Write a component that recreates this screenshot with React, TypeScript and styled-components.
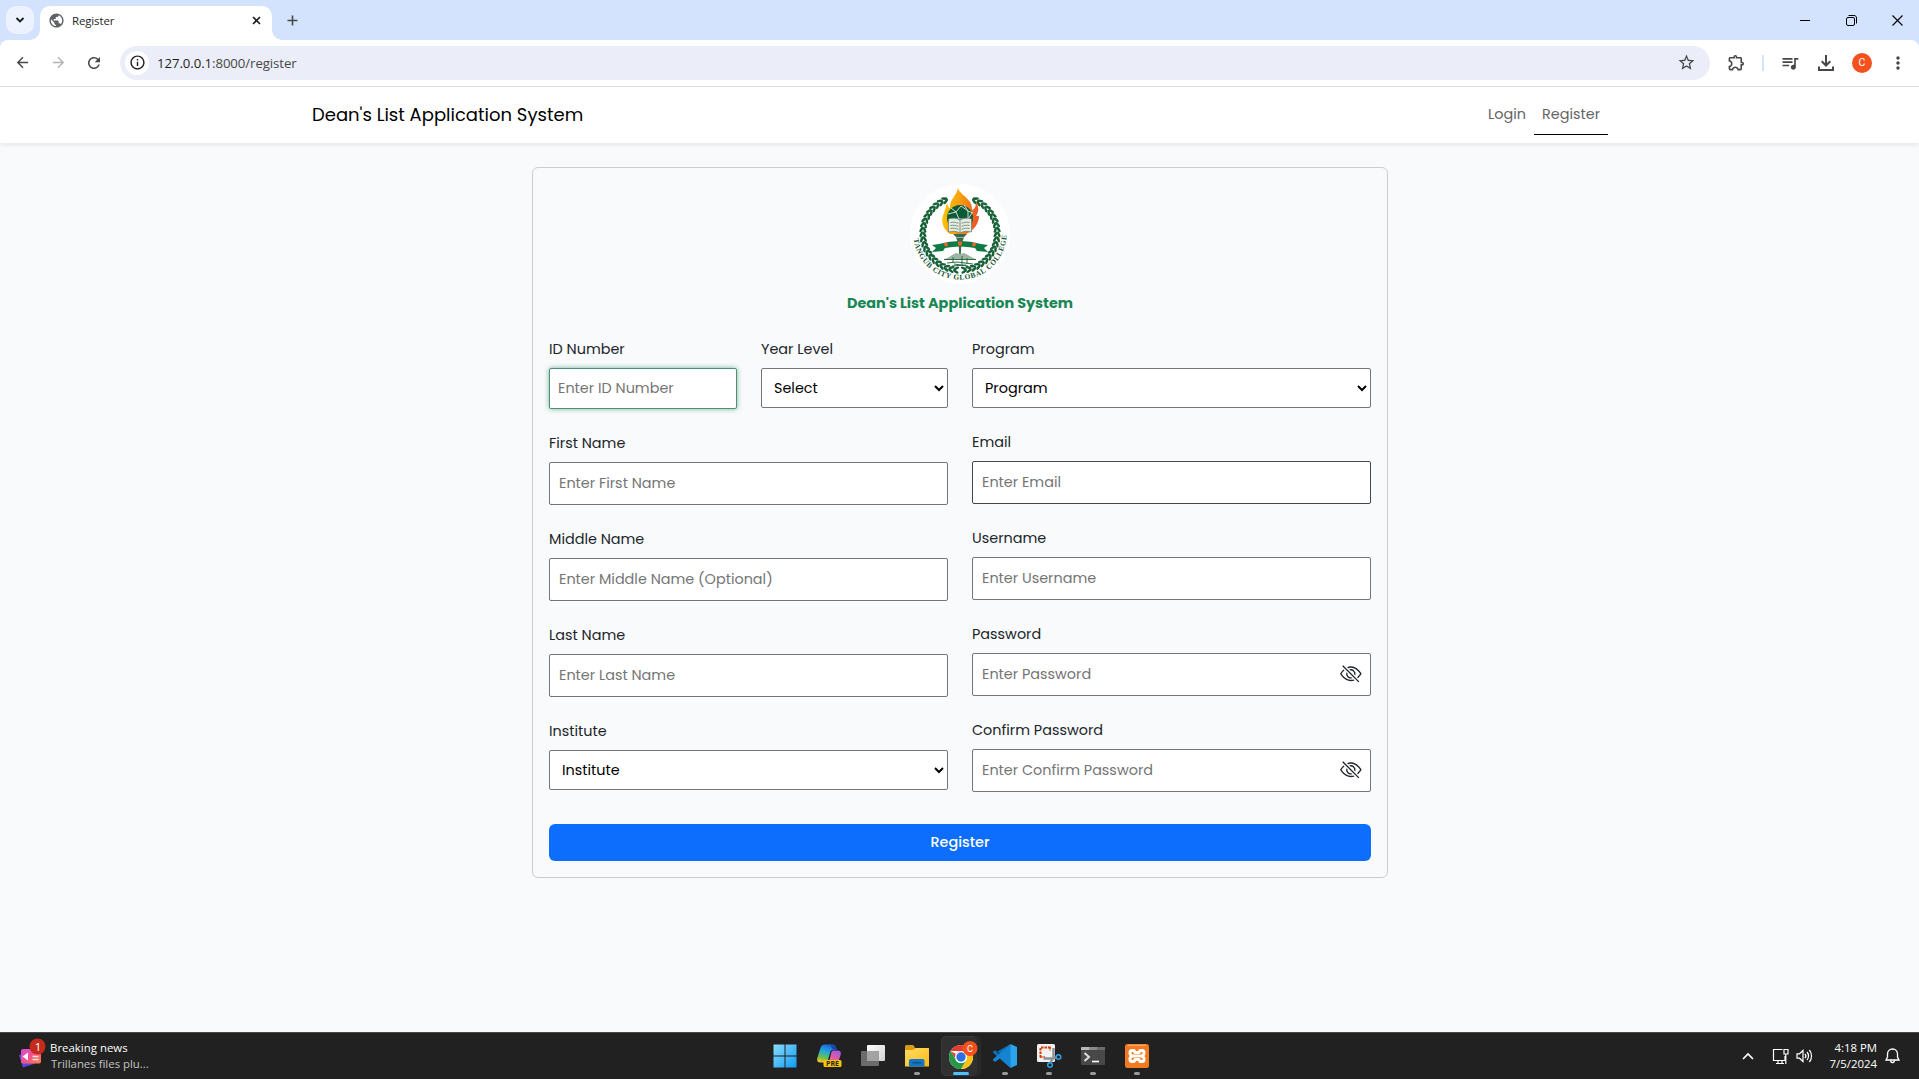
import React from "react";
import styled, { createGlobalStyle } from "styled-components";
import { BsEyeSlash } from "react-icons/bs";
import {
  MdArrowBack,
  MdArrowForward,
  MdRefresh,
  MdOutlineInfo,
  MdStarBorder,
  MdOutlineExtension,
  MdQueueMusic,
  MdMoreVert,
  MdPublic,
} from "react-icons/md";

const ui = `"Open Sans", "Noto Sans", sans-serif`;
const brand = `Poppins, Inter, "Open Sans", sans-serif`;

const GlobalStyle = createGlobalStyle`
  *, *::before, *::after { box-sizing: border-box; }
  body { margin: 0; background: #f8fafc; overflow: hidden; }
  svg { display: block; flex: none; overflow: visible; }
`;

const Screen = styled.div`
  display: flex;
  flex-direction: column;
  height: 1079px;
  font-family: ${ui};
`;

/* ---------- Browser window ---------- */

const TabStrip = styled.div`
  display: flex;
  align-items: flex-start;
  height: 40px;
  padding: 6px 0 0 6px;
  background: #d3e3fd;
`;

const TabSearch = styled.button`
  display: grid;
  place-items: center;
  width: 28px;
  height: 28px;
  padding: 0;
  border: 0;
  border-radius: 10px;
  background: #ecf3fe;
`;

const Tab = styled.div`
  position: relative;
  display: flex;
  align-items: center;
  width: 232px;
  height: 34px;
  margin-left: 6px;
  padding: 0 8px 6px 8px;
  border-radius: 10px 10px 0 0;
  background: #fff;
  color: #1f1f1f;
  font-size: 11.4px;

  &::before,
  &::after {
    content: "";
    position: absolute;
    bottom: 0;
    width: 10px;
    height: 10px;
  }
  &::before {
    left: -10px;
    background: radial-gradient(circle at 0 0, transparent 9.5px, #fff 10px);
  }
  &::after {
    right: -10px;
    background: radial-gradient(circle at 100% 0, transparent 9.5px, #fff 10px);
  }
`;

const TabTitle = styled.span`
  flex: 1;
  margin-left: 7px;
  padding-top: 1px;
  letter-spacing: -0.1px;
  line-height: 16px;
`;

const StripButton = styled.span`
  display: grid;
  place-items: center;
  width: 16px;
  height: 28px;
`;

const NewTab = styled.span`
  display: grid;
  place-items: center;
  width: 28px;
  height: 28px;
  margin-left: 6px;
`;

const WindowControls = styled.div`
  display: flex;
  margin: 0 -1px 0 auto;
`;

const WindowButton = styled.span`
  display: grid;
  place-items: center;
  width: 46px;
  height: 28px;
`;

const StripFill = styled.div`
  background: #d3e3fd;
`;

const Toolbar = styled.div`
  display: flex;
  align-items: center;
  height: 47px;
  padding: 0 3px 1px 9px;
  border-bottom: 1px solid #dfe1e3;
  border-radius: 8px 8px 0 0;
  background: #fff;
`;

const ToolButton = styled.span<{ $w: number; $dim?: boolean }>`
  flex: none;
  display: grid;
  place-items: center;
  width: ${(p) => p.$w}px;
  height: 34px;
  color: ${(p) => (p.$dim ? "#b3b3b3" : "#474747")};
`;

const AddressBar = styled.div`
  flex: none;
  display: flex;
  align-items: center;
  width: 1590px;
  height: 34px;
  margin-left: 13px;
  padding: 0 14px 0 5px;
  border-radius: 17px;
  background: #ebeef8;
  color: #474747;
`;

const SiteInfo = styled.span`
  display: grid;
  place-items: center;
  width: 24px;
  height: 24px;
  border-radius: 50%;
  background: #fff;
  color: #1f1f1f;
`;

const Url = styled.span`
  flex: 1;
  margin-left: 8px;
  font-size: 13.2px;
  letter-spacing: -0.07px;
  line-height: 20px;

  b {
    color: #1f1f1f;
    font-weight: 400;
  }
`;

const Divider = styled.span`
  width: 2px;
  height: 16px;
  margin-right: 8px;
  background: #d3e3fd;
`;

const Profile = styled.span`
  display: grid;
  place-items: center;
  width: 20px;
  height: 20px;
  margin: 0 8px;
  border-radius: 50%;
  background: #f4511e;
  color: #fff;
  font: 400 10.5px/20px Roboto, sans-serif;
`;

/* ---------- Page ---------- */

const Page = styled.div`
  flex: 1;
  display: flex;
  flex-direction: column;
  align-items: center;
  background: #f8fafc;
  color: #212529;
  font-family: ${brand};
  font-size: 14.4px;
`;

const NavBar = styled.nav`
  align-self: stretch;
  display: flex;
  justify-content: center;
  height: 56px;
  padding-left: 1px;
  background: #fff;
  box-shadow: 0 2px 4px rgba(0, 0, 0, 0.075);
`;

const NavInner = styled.div`
  display: flex;
  align-items: center;
  justify-content: space-between;
  width: 1296px;
`;

const Brand = styled.span`
  padding-bottom: 2px;
  color: #000;
  font-size: 18px;
`;

const NavLinks = styled.div`
  display: flex;
`;

const NavLink = styled.a<{ $active?: boolean }>`
  height: 40px;
  padding: 0 8px;
  border-bottom: 1px solid ${(p) => (p.$active ? "#000" : "transparent")};
  color: #646464;
  line-height: 39px;
`;

const Card = styled.form`
  display: flex;
  flex-direction: column;
  align-items: center;
  width: 856px;
  height: 711px;
  margin: 24px 0 0 1px;
  padding: 16px;
  border: 1px solid #cbcdcf;
  border-radius: 6px;
`;

const CardTitle = styled.h1`
  height: 22px;
  margin: 8px 0 24px;
  color: #198754;
  font-size: 14.4px;
  font-weight: 700;
  line-height: 22px;
`;

const Columns = styled.div`
  align-self: stretch;
  display: grid;
  grid-template-columns: 399px 399px;
  gap: 24px;
`;

const Column = styled.div`
  display: flex;
  flex-direction: column;
  gap: 23px;
`;

const SplitRow = styled.div`
  display: grid;
  grid-template-columns: 188px 187px;
  gap: 24px;
`;

const Field = styled.div`
  display: flex;
  flex-direction: column;
  gap: 8px;
`;

const Label = styled.label`
  height: 22px;
  line-height: 22px;
`;

const InputWrap = styled.div`
  position: relative;
  display: flex;
`;

const Input = styled.input<{ $look?: "focus" | "dark" }>`
  width: 100%;
  height: ${(p) => (p.$look === "focus" ? 41 : 43)}px;
  padding: ${(p) => (p.$look === "focus" ? "0 8px" : "0 9px")};
  border: 1px solid
    ${(p) => (p.$look === "focus" ? "#4f8f73" : p.$look === "dark" ? "#45464b" : "#76767a")};
  border-radius: 2px;
  outline: 0;
  background: #fff;
  box-shadow: ${(p) => (p.$look === "focus" ? "0 0 5px rgba(25, 135, 84, 0.6)" : "none")};
  font: inherit;

  &::placeholder {
    color: #757575;
    opacity: 1;
  }
`;

const Select = styled.select`
  width: 100%;
  height: 40px;
  padding: 0 8px;
  border: 1px solid #767676;
  border-radius: 2px;
  background: #fff;
  color: #000;
  font: inherit;
`;

const EyeToggle = styled.span`
  position: absolute;
  top: 10px;
  right: 9px;
`;

const Submit = styled.button`
  align-self: stretch;
  height: 37px;
  margin-top: 32px;
  border: 0;
  border-radius: 6px;
  background: #0d6efd;
  color: #fff;
  font: inherit;
  font-weight: 500;
`;

/* ---------- Taskbar ---------- */

const Taskbar = styled.footer`
  display: grid;
  grid-template-columns: 1fr auto 1fr;
  height: 47px;
  border-top: 1px solid #47484a;
  background: #212121;
  color: #fff;
  font-size: 11.4px;
`;

const News = styled.div`
  display: flex;
  align-items: center;
  gap: 5px;
  padding-left: 17px;
`;

const NewsText = styled.div`
  line-height: 16px;

  p {
    margin: 0;
    letter-spacing: 0.02px;
  }
  p + p {
    padding-left: 1px;
    color: #c3c3c3;
    letter-spacing: 0;
  }
`;

const Apps = styled.div`
  display: flex;
  align-items: center;
  padding-left: 2px;
`;

const AppSlot = styled.span<{ $active?: boolean; $running?: boolean }>`
  position: relative;
  display: grid;
  place-items: center;
  width: 40px;
  height: 40px;
  margin: 0 2px;
  border-radius: 5px;
  background: ${(p) => (p.$active ? "#303030" : "none")};
  box-shadow: ${(p) => (p.$active ? "inset -4px 0 0 #292929, inset 0 0 0 1px #393939" : "none")};

  &::after {
    content: "";
    position: absolute;
    bottom: 1px;
    left: 50%;
    width: ${(p) => (p.$active ? 16 : 6)}px;
    height: 3px;
    border-radius: 2px;
    transform: translateX(-50%);
    background: ${(p) => (p.$active ? "#4cc2ff" : p.$running ? "#9a9a9a" : "none")};
  }
`;

const Tray = styled.div`
  display: flex;
  align-items: center;
  justify-content: flex-end;
  padding-right: 19px;
`;

const TrayIcon = styled.span<{ $gap: number }>`
  margin-right: ${(p) => p.$gap}px;
`;

const Clock = styled.div`
  margin-right: 8px;
  line-height: 16px;
  text-align: right;
`;

/* ---------- Drawings ---------- */

const stroke = { fill: "none", stroke: "#fff", strokeWidth: 1.2 } as const;

function Wreath() {
  const leaves: React.ReactElement[] = [];
  for (let i = 0; i < 21; i++) {
    const deg = 25 + i * 7.5;
    for (const side of [-1, 1]) {
      const a = (deg * Math.PI) / 180;
      const x = 50 + side * Math.sin(a) * 37.2;
      const y = 49.6 - Math.cos(a) * 36.6;
      const t = side * deg;
      leaves.push(
        <g key={`${i}${side}`} transform={`translate(${x} ${y}) rotate(${t})`}>
          <ellipse cx="0" cy="-1.8" rx="3.2" ry="1.3" transform={`rotate(${side * -26})`} />
          <ellipse cx="0" cy="1.8" rx="3.2" ry="1.3" transform={`rotate(${side * 26})`} />
        </g>
      );
    }
  }
  return <g fill="#176038">{leaves}</g>;
}

const Seal = () => (
  <svg width="100" height="100" viewBox="0 0 100 100">
    <defs>
      <linearGradient id="flame" x1="0" y1="0" x2="1" y2="0.2">
        <stop offset="0" stopColor="#fdd000" />
        <stop offset=".5" stopColor="#f9a010" />
        <stop offset="1" stopColor="#ee5a24" />
      </linearGradient>
      <path id="ring" d="M3.4 52A46.7 46.7 0 0 0 96.6 52" />
    </defs>
    <circle cx="50" cy="50" r="50" fill="#fff" />
    <Wreath />
    <path
      fill="url(#flame)"
      d="M48 4c1 5 8 8 12 14 2 3 2 6 2 8 3-1 4-4 4-8 3 5 3 9 0 14l3 0c0 8-6 15-13 18H40c-7-5-10-13-6-21l3-10c1 4 2 5 3 5-1-8 7-13 8-20z"
    />
    <circle cx="50" cy="34" r="13" fill="#0d5a37" />
    <g fill="none" stroke="#dfeee4" strokeWidth=".9">
      <path d="M38 30l8-2 5-6M46 28l3 7 9 0 4-6M51 22l7 5 0 8M41 24l5 4M39 36l10-1M54 21l4 6 5 2" />
    </g>
    <path fill="#e6ebe0" stroke="#6d8577" strokeWidth=".8" d="M38.500 35c4-1.500 8-1 11.500 1 3.500-2 8-2.500 11.500-1v13c-4-1-8-1-11.500 1-3.500-2-7.500-2-11.500-1z" />
    <path fill="none" stroke="#7b9786" strokeWidth="1" d="M50 36v13M40.500 38.500c3-.5 5-.3 8 .8M40.500 41.500c3-.5 5-.3 8 .8M40.500 44.500c3-.5 5-.3 8 .8M59.500 38.500c-3-.5-5-.3-8 .8M59.500 41.500c-3-.5-5-.3-8 .8M59.500 44.500c-3-.5-5-.3-8 .8" />
    <path fill="#386b4b" d="M43 50h14l-3 3h-8zM46 53.500h8l-2 5h-4zM48.500 58h3l-.7 13h-1.600z" />
    <path fill="#0f7a43" d="M29 60q21-6 42 0l7 1-4 3 4 4-11-1-2-3q-15-3-30 0l-2 3-11 1 4-4-4-3z" />
    <g fill="#f0632a">
      <circle cx="36" cy="60.500" r="1.900" />
      <circle cx="50" cy="59.500" r="2.200" />
      <circle cx="64" cy="60.500" r="1.900" />
    </g>
    <path fill="#9db5a1" d="M34 75c5-1 7-4 12-6l4 1 4-1c5 2 8 5 12 6l-8 1H42z" />
    <g fill="none" stroke="#2c6b47" strokeWidth="1">
      <path d="M34 75.500h32M37 79l10-1 16 2M42 82l14-1M43 73v6M52 72v10M57 74v6M44 80l14 2" />
    </g>
    <text fill="#14532f" fontFamily='"Liberation Serif", serif' fontWeight="700" fontSize="7.400" letterSpacing="0">
      <textPath href="#ring" startOffset="3" textLength="138" lengthAdjust="spacing">
        TANGUB CITY GLOBAL COLLEGE
      </textPath>
    </text>
  </svg>
);

const WindowsIcon = () => (
  <svg width="24" height="24" viewBox="0 0 24 24">
    <defs>
      <linearGradient id="win" x1="0" y1="0" x2="1" y2="1">
        <stop offset="0" stopColor="#8adcfb" />
        <stop offset="1" stopColor="#0f9cf3" />
      </linearGradient>
    </defs>
    <path fill="url(#win)" d="M.5 .5h11v11H.5zM12.500 .5h11v11H12.500zM.5 12.500h11v11H.5zM12.500 12.500h11v11H12.500z" />
  </svg>
);

const CopilotIcon = () => (
  <svg width="26" height="26" viewBox="0 0 26 26">
    <defs>
      <linearGradient id="cpa" x1=".6" y1="0" x2=".3" y2="1">
        <stop offset="0" stopColor="#1e62d8" />
        <stop offset=".4" stopColor="#22a6e0" />
        <stop offset=".75" stopColor="#6cc04a" />
        <stop offset="1" stopColor="#f4c51d" />
      </linearGradient>
      <linearGradient id="cpb" x1=".7" y1="0" x2=".3" y2="1">
        <stop offset="0" stopColor="#9a5be8" />
        <stop offset=".5" stopColor="#e8599d" />
        <stop offset="1" stopColor="#f98b5c" />
      </linearGradient>
    </defs>
    <path fill="url(#cpa)" d="M8.500 1.500h8c2 0 3 1 3.600 3l.6 2.200h-3.500c-1.700 0-2.500 1-3 2.600L12 17c-.6 1.600-1.500 2.500-3 2.500H4.500C1.800 19.500.6 18 1.300 15L4.500 5c.7-2.300 2-3.500 4-3.500z" />
    <path fill="#1747a8" d="M14 1.500h2.500c2 0 3 1 3.600 3l.6 2.200H17z" />
    <path fill="url(#cpb)" d="M17.500 7.500h4.200c2.500 0 3.700 1.500 3 4.200l-2.700 8c-.6 2-2 3.300-4 3.300h-6l1-3.500 2-8.500c.4-2 1-3.500 2.500-3.500z" />
    <rect x="7.500" y="17" width="18" height="7" rx="1.500" fill="#fdc500" />
    <text x="16.500" y="23.100" textAnchor="middle" fontFamily='"Open Sans", sans-serif' fontWeight="700" fontSize="7" fill="#222">PRE</text>
  </svg>
);

const TaskViewIcon = () => (
  <svg width="24" height="24" viewBox="0 0 24 24">
    <defs>
      <linearGradient id="tv" x1="0" y1="0" x2="1" y2="1">
        <stop offset="0" stopColor="#fff" />
        <stop offset="1" stopColor="#d2d2d2" />
      </linearGradient>
    </defs>
    <rect x="6" y="1" width="18" height="16" rx="1" fill="url(#tv)" />
    <rect x="0" y="7" width="18" height="15" rx="1" fill="#6c6c6c" />
    <path d="M6 7h12v10H6z" fill="#a3a3a3" />
  </svg>
);

const ExplorerIcon = () => (
  <svg width="24" height="24" viewBox="0 0 24 24">
    <defs>
      <linearGradient id="fold" x1="0" y1="0" x2="1" y2="1">
        <stop offset="0" stopColor="#ffdc66" />
        <stop offset="1" stopColor="#fbb917" />
      </linearGradient>
    </defs>
    <path fill="#d89b12" d="M0 2.500C0 1.700.7 1 1.500 1H7c1 0 1.500.3 2 1l1 2v5H0z" />
    <path fill="url(#fold)" d="M0 6h8l2.500-2H24v18.500H0z" />
    <path fill="#1376c4" d="M4 22.500V17c0-1.300.7-2 2-2h11.500c1.300 0 2 .7 2 2v5.500z" />
    <path fill="#0a5594" d="M7.500 18h9v1.500h-9z" />
  </svg>
);

const ChromeIcon = () => (
  <svg width="29" height="30" viewBox="0 0 29 30">
    <circle cx="15" cy="16" r="12" fill="#fff" />
    <path fill="#e33b2e" d="M4.600 10A12 12 0 0 1 25.400 10H15a6 6 0 0 0-5.200 3z M4.600 10l5.200 9L15 16V10z" />
    <path fill="#fbc116" d="M25.400 10A12 12 0 0 1 15 28l5.200-9A6 6 0 0 0 20.200 13L15 10z" />
    <path fill="#279847" d="M15 28A12 12 0 0 1 4.600 10l5.200 9a6 6 0 0 0 10.400 0z" />
    <circle cx="15" cy="16" r="6" fill="#fff" />
    <circle cx="15" cy="16" r="4.700" fill="#2f6fe4" />
    <circle cx="24" cy="7.500" r="7.500" fill="#f4511e" />
    <text x="24" y="10.700" textAnchor="middle" fontFamily="Roboto, sans-serif" fontSize="9" fill="#fff">C</text>
  </svg>
);

const CodeIcon = () => (
  <svg width="24" height="24" viewBox="0 0 24 24">
    <path fill="#0a6fb8" d="M17.500 0L7 9.700 2.500 6.200 0 7.500v1.200L17.500 24l1-6L3.500 8z" />
    <path fill="#1583cf" d="M17.500 24L7 14.300l-4.500 3.500L0 16.500v-1.200L17.500 0l1 6z" />
    <path fill="#2ba4ee" d="M17.500 0L24 3v18l-6.500 3z" />
  </svg>
);

const SnipIcon = () => (
  <svg width="26" height="26" viewBox="0 0 26 26">
    <rect x="1" y="1" width="18" height="18" rx="1.500" fill="#f1f1f1" />
    <path fill="none" stroke="#d83b01" strokeWidth="2" strokeDasharray="2.600 .9" d="M4.500 14.500V4.500h10.500" />
    <path fill="none" stroke="#d83b01" strokeWidth="1.500" strokeDasharray="2.600 .9" d="M4 14h5M14 4v4" />
    <path fill="none" stroke="#8d8f93" strokeWidth="2.400" d="M17.500 5v9.500l-3 5M7.500 15.500H17l4-1.500" />
    <circle cx="22.500" cy="14" r="2.300" fill="none" stroke="#2aa2ea" strokeWidth="1.500" />
    <circle cx="14" cy="22" r="2.300" fill="none" stroke="#2aa2ea" strokeWidth="1.500" />
  </svg>
);

const TerminalIcon = () => (
  <svg width="24" height="24" viewBox="0 0 24 24">
    <rect x="0" y="3" width="24" height="18" rx="1" fill="#484848" />
    <path fill="#b8b8b8" d="M0 6V4c0-.6.400-1 1-1h7v3z" />
    <path fill="#8a8a8a" d="M8 3h8v3H8z" />
    <path fill="#6b6b6b" d="M16 3h7c.6 0 1 .4 1 1v2h-8z" />
    <path fill="none" stroke="#dcdcdc" strokeWidth="2" d="M3.500 9l4.500 4-4.500 4" />
    <path fill="none" stroke="#fff" strokeWidth="1.600" d="M11 17.500h7" />
  </svg>
);

const XamppIcon = () => (
  <svg width="24" height="24" viewBox="0 0 24 24">
    <rect width="24" height="24" rx="2.500" fill="#f27b22" />
    <path d="M3 1.300h18" stroke="#f9b277" strokeWidth="1" />
    <path
      fill="none"
      stroke="#fff"
      strokeWidth="3"
      strokeLinecap="round"
      strokeLinejoin="round"
      d="M9 6.500H7a2 2 0 0 0-2 2v.5a3 3 0 0 0 3 3 3 3 0 0 0-3 3v.5a2 2 0 0 0 2 2h2l1-2h4l1 2h2a2 2 0 0 0 2-2V15a3 3 0 0 0-3-3 3 3 0 0 0 3-3v-.5a2 2 0 0 0-2-2h-2l-1 2h-4zM8 12h8"
    />
  </svg>
);

const NewsIcon = () => (
  <svg width="28" height="30" viewBox="0 0 28 30">
    <defs>
      <linearGradient id="news" x1="0" y1="0" x2="1" y2="1">
        <stop offset="0" stopColor="#d54be0" />
        <stop offset=".5" stopColor="#f2528c" />
        <stop offset="1" stopColor="#f98443" />
      </linearGradient>
    </defs>
    <path fill="#5a4ad8" d="M2 14l4 12.500 12-4-8-10z" />
    <rect x="4" y="8" width="20" height="14.500" rx="2" fill="url(#news)" />
    <path fill="#fff" d="M5.500 15.500l5.500-4v8z" />
    <path stroke="#ffe0dc" strokeWidth="1.400" d="M15.500 15.500h6M15.500 18.500h6" />
    <circle cx="20.500" cy="5.500" r="8" fill="#c42b1c" />
    <text x="21" y="9.500" textAnchor="middle" fontFamily='"Open Sans", sans-serif' fontSize="11.500" fill="#fff">1</text>
  </svg>
);

/* ---------- Form pieces ---------- */

function TextField(props: {
  label: string;
  hint: string;
  look?: "focus" | "dark";
  secret?: boolean;
}) {
  return (
    <Field>
      <Label>{props.label}</Label>
      <InputWrap>
        <Input
          type={props.secret ? "password" : "text"}
          placeholder={props.hint}
          $look={props.look}
        />
        {props.secret && (
          <EyeToggle>
            <BsEyeSlash size={21.6} />
          </EyeToggle>
        )}
      </InputWrap>
    </Field>
  );
}

function SelectField({ label, value }: { label: string; value: string }) {
  return (
    <Field>
      <Label>{label}</Label>
      <Select defaultValue={value}>
        <option>{value}</option>
      </Select>
    </Field>
  );
}

export default function App() {
  return (
    <Screen>
      <GlobalStyle />
      <TabStrip>
        <TabSearch>
          <svg width="10" height="6" viewBox="0 0 10 6">
            <path d="M1.500 1L5 4.500 8.500 1" fill="none" stroke="#1f1f1f" strokeWidth="1.900" />
          </svg>
        </TabSearch>
        <Tab>
          <MdPublic size={17} color="#5f6368" />
          <TabTitle>Register</TabTitle>
          <StripButton>
            <svg width="9" height="9" viewBox="0 0 9 9">
              <path d="M1 1l7 7M8 1L1 8" stroke="#1f1f1f" strokeWidth="1.600" />
            </svg>
          </StripButton>
        </Tab>
        <NewTab>
          <svg width="11" height="11" viewBox="0 0 11 11">
            <path d="M5.500 .5v10M.5 5.500h10" stroke="#474747" strokeWidth="1.600" />
          </svg>
        </NewTab>
        <WindowControls>
          <WindowButton>
            <svg width="10" height="10" viewBox="0 0 10 10">
              <path d="M0 5.500h10" stroke="#000" />
            </svg>
          </WindowButton>
          <WindowButton>
            <svg width="11" height="11" viewBox="0 0 11 11" fill="none" stroke="#000">
              <rect x=".5" y="2.500" width="8" height="8" rx="1.500" />
              <path d="M2.500 .5H8c1.500 0 2.500 1 2.500 2.500v5.500" />
            </svg>
          </WindowButton>
          <WindowButton>
            <svg width="11" height="11" viewBox="0 0 11 11">
              <path d="M.5 .5l10 10M10.500 .5l-10 10" stroke="#000" strokeWidth="1.100" />
            </svg>
          </WindowButton>
        </WindowControls>
      </TabStrip>
      <StripFill>
        <Toolbar>
          <ToolButton $w={26}>
            <MdArrowBack size={17} />
          </ToolButton>
          <ToolButton $w={46} $dim>
            <MdArrowForward size={17} />
          </ToolButton>
          <ToolButton $w={26}>
            <MdRefresh size={18} />
          </ToolButton>
          <AddressBar>
            <SiteInfo>
              <MdOutlineInfo size={17} />
            </SiteInfo>
            <Url>
              <b>127.0.0.1</b>:8000/register
            </Url>
            <MdStarBorder size={19} />
          </AddressBar>
          <ToolButton $w={52}>
            <MdOutlineExtension size={19} />
          </ToolButton>
          <Divider />
          <ToolButton $w={36}>
            <MdQueueMusic size={20} />
          </ToolButton>
          <ToolButton $w={36}>
            <svg width="16" height="16" viewBox="0 0 16 16" fill="none" stroke="currentColor" strokeWidth="2">
              <path d="M8 0v10M3.700 6.200L8 10.500l4.300-4.300M1 11.500V15h14v-3.500" />
            </svg>
          </ToolButton>
          <Profile>C</Profile>
          <ToolButton $w={36}>
            <MdMoreVert size={20} />
          </ToolButton>
        </Toolbar>
      </StripFill>

      <Page>
        <NavBar>
          <NavInner>
            <Brand>Dean's List Application System</Brand>
            <NavLinks>
              <NavLink>Login</NavLink>
              <NavLink $active>Register</NavLink>
            </NavLinks>
          </NavInner>
        </NavBar>
        <Card>
          <Seal />
          <CardTitle>Dean's List Application System</CardTitle>
          <Columns>
            <Column>
              <SplitRow>
                <TextField label="ID Number" hint="Enter ID Number" look="focus" />
                <SelectField label="Year Level" value="Select" />
              </SplitRow>
              <TextField label="First Name" hint="Enter First Name" />
              <TextField label="Middle Name" hint="Enter Middle Name (Optional)" />
              <TextField label="Last Name" hint="Enter Last Name" />
              <SelectField label="Institute" value="Institute" />
            </Column>
            <Column>
              <SelectField label="Program" value="Program" />
              <TextField label="Email" hint="Enter Email" look="dark" />
              <TextField label="Username" hint="Enter Username" />
              <TextField label="Password" hint="Enter Password" secret />
              <TextField label="Confirm Password" hint="Enter Confirm Password" secret />
            </Column>
          </Columns>
          <Submit type="button">Register</Submit>
        </Card>
      </Page>

      <Taskbar>
        <News>
          <NewsIcon />
          <NewsText>
            <p>Breaking news</p>
            <p>Trillanes files plu...</p>
          </NewsText>
        </News>
        <Apps>
          <AppSlot><WindowsIcon /></AppSlot>
          <AppSlot><CopilotIcon /></AppSlot>
          <AppSlot><TaskViewIcon /></AppSlot>
          <AppSlot $running><ExplorerIcon /></AppSlot>
          <AppSlot $active><ChromeIcon /></AppSlot>
          <AppSlot $running><CodeIcon /></AppSlot>
          <AppSlot $running><SnipIcon /></AppSlot>
          <AppSlot $running><TerminalIcon /></AppSlot>
          <AppSlot $running><XamppIcon /></AppSlot>
        </Apps>
        <Tray>
          <TrayIcon $gap={18}>
            <svg width="12" height="8" viewBox="0 0 12 8">
              <path {...stroke} strokeWidth="1.700" d="M1 7l5-5 5 5" />
            </svg>
          </TrayIcon>
          <TrayIcon $gap={7}>
            <svg width="17" height="17" viewBox="0 0 17 17">
              <path {...stroke} d="M10.500 1.500h-9v11H13V8M4 15.500h8M6 13v2.500M10 13v2.500M13.800 6.500V16M12 1.500h4v4.500h-4z" />
            </svg>
          </TrayIcon>
          <TrayIcon $gap={17}>
            <svg width="17" height="16" viewBox="0 0 17 16">
              <path {...stroke} d="M1 5.800h2.500L7 2.500v11L3.500 10.200H1zM9 5.800c1 1.200 1 3.200 0 4.400M11 4c2 2.200 2 5.800 0 8M13.300 2c3 3.200 3 8.800 0 12" />
            </svg>
          </TrayIcon>
          <Clock>
            <div>4:18 PM</div>
            <div>7/5/2024</div>
          </Clock>
          <svg width="15" height="16" viewBox="0 0 15 16">
            <path {...stroke} strokeWidth="1.300" d="M1 12h13l-1.500-3V6c0-3-2.200-5-5-5s-5 2-5 5v3zM5.500 12.500c.3 1.500 1 2.200 2 2.200s1.700-.7 2-2.200" />
          </svg>
        </Tray>
      </Taskbar>
    </Screen>
  );
}
